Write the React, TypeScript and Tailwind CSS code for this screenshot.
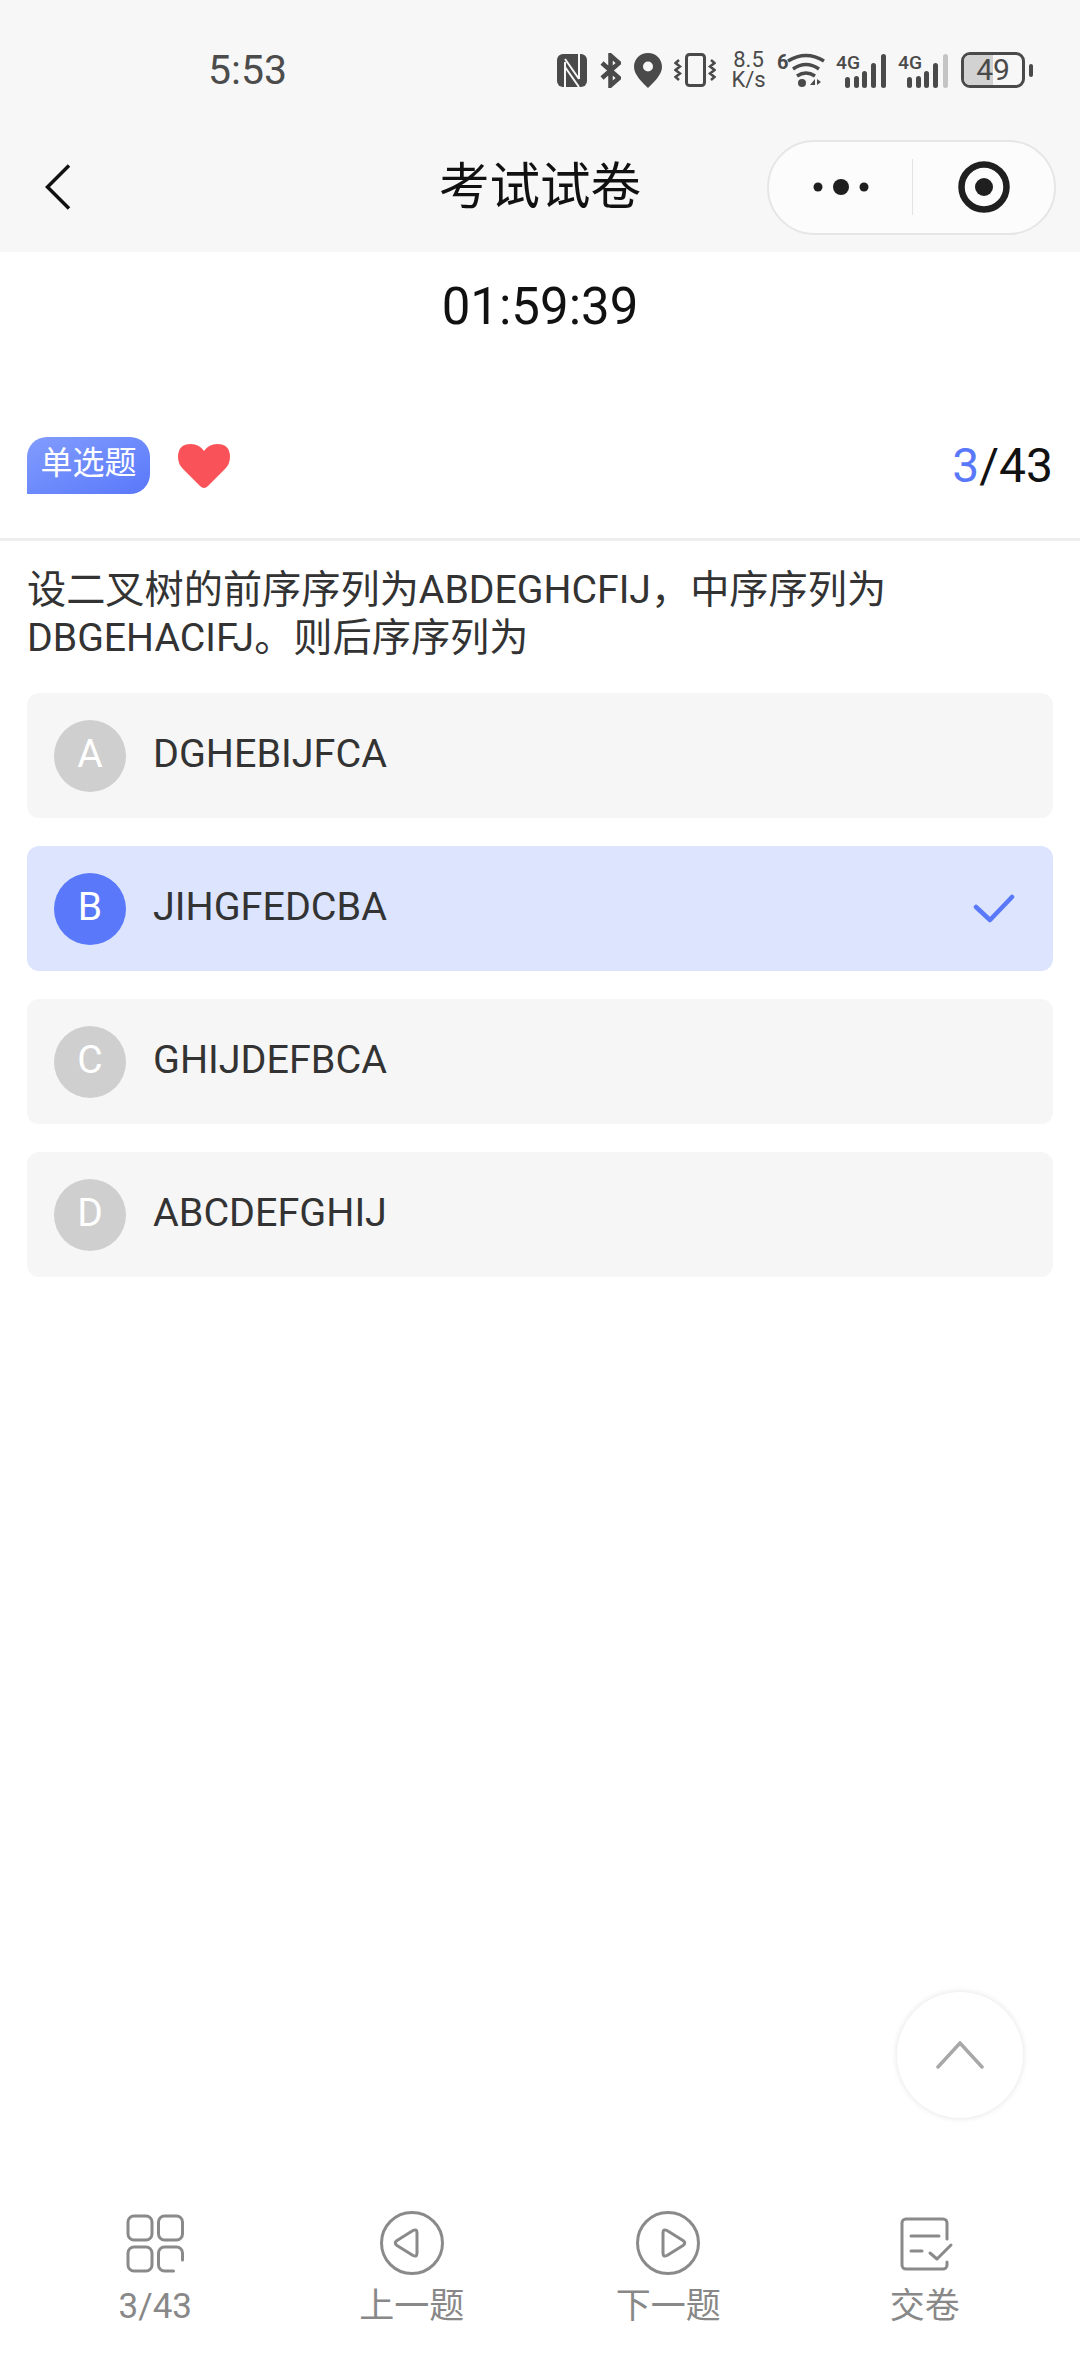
import React from "react";

const options = [
    {key: "A", text: "DGHEBIJFCA"},
    {key: "B", text: "JIHGFEDCBA", selected: true},
    {key: "C", text: "GHIJDEFBCA"},
    {key: "D", text: "ABCDEFGHIJ"},
];

const Signal = ({weak}: {weak?: boolean}) => (
    <svg width="50" height="41" viewBox="0 -3 50 41" fill="#4a4a4a">
        <text x="0" y="16" fontSize="19" fontWeight="500" textLength="24" lengthAdjust="spacingAndGlyphs">4G</text>
        <rect x="9" y="24" width="5" height="11" rx="2.5" />
        <rect x="18" y="23" width="5" height="12" rx="2.5" />
        <rect x="26" y="18" width="5" height="17" rx="2.5" />
        <rect x="35" y="10" width="5" height="25" rx="2.5" />
        <rect x="45" y="1" width="5" height="34" rx="2.5" fill={weak ? "#c4c4c4" : "#4a4a4a"} />
    </svg>
);

const StatusBar = () => (
    <div className="h-[122px] pt-[50px] pl-[208px] pr-[47px] flex justify-between items-start">
        <span className="h-[40px] leading-[40px] text-[41px] text-[#4c4c4c]">5:53</span>
        <div className="flex items-center h-[40px] text-[#4a4a4a]">
            <svg width="30" height="33" viewBox="0 0 30 33">
                <rect width="30" height="33" rx="6" fill="#4a4a4a" />
                <path d="M8 8v25M22 0v25" stroke="#f7f7f7" strokeWidth="2" fill="none" />
                <path d="M8 5l14 20M8 13l14 20" stroke="#f7f7f7" strokeWidth="2" fill="none" />
            </svg>
            <svg className="ml-[13px]" width="21" height="35" viewBox="0 0 21 35" fill="none" stroke="#4a4a4a" strokeWidth="4.500">
                <path d="M2 10l17 15-8.500 7.500V2.500L19 10 2 25" />
            </svg>
            <svg className="ml-[13px]" width="28" height="35" viewBox="0 0 28 35">
                <path d="M14 0C6 0 0 6 0 14 0 22 9 30 14 35 19 30 28 22 28 14 28 6 22 0 14 0z" fill="#4a4a4a" />
                <circle cx="14" cy="13.500" r="5" fill="#f7f7f7" />
            </svg>
            <svg className="ml-[12px]" width="42" height="34" viewBox="0 0 42 34" fill="none" stroke="#4a4a4a" strokeWidth="2.500">
                <rect x="12.500" y="1.500" width="18" height="31" rx="3" strokeWidth="3" />
                <path d="M5 7L1.500 10 6 13.500 1.500 17 6 20.500 1.500 24 5 27M37 7l3.500 3L36 13.500l4.500 3.500-4.500 3.500 4.500 3.500L37 27" />
            </svg>
            <div className="ml-[15px] w-[35px] flex flex-col items-center text-[22px] leading-[20px] text-[#4a4a4a]">
                <span>8.5</span>
                <span>K/s</span>
            </div>
            <svg className="ml-[11px]" width="49" height="38" viewBox="0 0 49 38" fill="none" stroke="#4a4a4a" strokeWidth="3.500">
                <text x="0" y="18" fontSize="20" fontWeight="700" fill="#4a4a4a" stroke="none">6</text>
                <path d="M11 10q18-11 36 0M16 18q13-9 26 0M20 25q9-6 18 0" />
                <circle cx="25" cy="32" r="4" fill="#4a4a4a" stroke="none" />
                <path d="M33 34h5v-6zM40 28v6l4-3z" fill="#4a4a4a" stroke="none" />
            </svg>
            <div className="ml-[10px] flex"><Signal /></div>
            <div className="ml-[12px] flex"><Signal weak /></div>
            <div className="ml-[13px] relative w-[64px] h-[36px] rounded-[9px] border-[3px] border-[#4a4a4a] overflow-hidden flex items-center justify-center">
                <div className="absolute left-0 top-0 bottom-0 w-[29px] bg-[#d2d2d2]" />
                <span className="relative text-[30px] leading-none text-[#4a4a4a]">49</span>
            </div>
            <div className="ml-[4px] w-[4px] h-[13px] rounded-full bg-[#4a4a4a]" />
        </div>
    </div>
);

const NavBar = () => (
    <div className="h-[130px] px-[24px] grid grid-cols-[1fr_auto_1fr] items-center">
        <svg className="ml-[21px]" width="26" height="46" viewBox="0 0 26 46" fill="none" stroke="#111" strokeWidth="3.500">
            <path d="M24 1.500L2.500 23 24 44.500" />
        </svg>
        <div className="text-[50.500px] leading-[60px] text-[#111]">考试试卷</div>
        <div className="flex justify-end">
            <div className="w-[289px] h-[95px] rounded-full border-2 border-[#e6e6e6] bg-[#fcfcfc] flex items-center">
                <div className="w-[143px] flex justify-center">
                    <svg width="56" height="16" viewBox="0 0 56 16" fill="#1f1f1f">
                        <circle cx="5" cy="8" r="4.500" />
                        <circle cx="28" cy="8" r="8" />
                        <circle cx="51" cy="8" r="4.500" />
                    </svg>
                </div>
                <div className="w-px h-[56px] bg-[#e3e3e3]" />
                <div className="flex-1 flex justify-center">
                    <svg width="52" height="52" viewBox="0 0 52 52">
                        <circle cx="26" cy="26" r="22.500" fill="none" stroke="#1f1f1f" strokeWidth="6.500" />
                        <circle cx="26" cy="26" r="9" fill="#1f1f1f" />
                    </svg>
                </div>
            </div>
        </div>
    </div>
);

const Option = ({letter, text, selected}: {letter: string; text: string; selected?: boolean}) => (
    <div className={selected
        ? "h-[125px] rounded-[12px] bg-[#dce4fe] pl-[27px] pr-[38px] flex items-center"
        : "h-[125px] rounded-[12px] bg-[#f6f6f6] pl-[27px] pr-[38px] flex items-center"}>
        <div className={selected
            ? "w-[72px] h-[72px] pb-[2px] rounded-full bg-[#5a78fa] text-white text-[39px] flex items-center justify-center"
            : "w-[72px] h-[72px] pb-[2px] rounded-full bg-[#cfcfcf] text-white text-[39px] flex items-center justify-center"}>
            {letter}
        </div>
        <div className="ml-[27px] pb-[3px] flex-1 text-[39.500px] text-[#333]">{text}</div>
        {selected && (
            <svg width="42" height="30" viewBox="0 0 42 30" fill="none" stroke="#5a78fa" strokeWidth="4.500" strokeLinecap="round" strokeLinejoin="round">
                <path d="M3 13l14 13L39 3" />
            </svg>
        )}
    </div>
);

const BottomBar = () => (
    <div className="mt-auto px-[27px] pb-[49px] grid grid-cols-4 text-[35px] leading-[40px] text-[#888]">
        <div className="flex flex-col items-center gap-[11px]">
            <svg width="66" height="66" viewBox="0 0 66 66" fill="none" stroke="#8a8a8a" strokeWidth="3">
                <rect x="6" y="6" width="24" height="24" rx="6" />
                <rect x="36.500" y="6" width="24" height="24" rx="6" />
                <rect x="6" y="37" width="24" height="24" rx="6" />
                <path d="M60.500 50V43a6 6 0 0 0-6-6H42.500a6 6 0 0 0-6 6v12a6 6 0 0 0 6 6h9" strokeLinecap="round" />
            </svg>
            <span>3/43</span>
        </div>
        <div className="flex flex-col items-center gap-[11px]">
            <svg width="66" height="66" viewBox="0 0 66 66" fill="none" stroke="#8a8a8a" strokeWidth="3">
                <circle cx="33" cy="33" r="30.500" />
                <path d="M18 30.500l16-10q4-2 4 2.500v20q0 4.500-4 2.500l-16-10q-3.500-2.500 0-5z" strokeLinejoin="round" />
            </svg>
            <span>上一题</span>
        </div>
        <div className="flex flex-col items-center gap-[11px]">
            <svg width="66" height="66" viewBox="0 0 66 66" fill="none" stroke="#8a8a8a" strokeWidth="3">
                <circle cx="33" cy="33" r="30.500" />
                <path d="M48 30.500l-16-10q-4-2-4 2.500v20q0 4.500 4 2.500l16-10q3.500-2.500 0-5z" strokeLinejoin="round" />
            </svg>
            <span>下一题</span>
        </div>
        <div className="flex flex-col items-center gap-[11px]">
            <svg width="66" height="66" viewBox="0 0 66 66" fill="none" stroke="#8a8a8a" strokeWidth="3" strokeLinecap="round" strokeLinejoin="round">
                <path d="M55 29V13a4 4 0 0 0-4-4H14a4 4 0 0 0-4 4v42a4 4 0 0 0 4 4h37a4 4 0 0 0 4-4v-3" />
                <path d="M19 26h28M19 41h11" />
                <path d="M38 43l7 6 14-14" />
            </svg>
            <span>交卷</span>
        </div>
    </div>
);

export default function App() {
    return (
        <div className="relative w-[1080px] h-[2376px] bg-white flex flex-col overflow-hidden font-[Roboto,'Noto_Sans_CJK_SC',sans-serif]">
            <div className="bg-[#f7f7f7]">
                <StatusBar />
                <NavBar />
            </div>

            <div className="h-[110px] flex items-center justify-center text-[51px] text-[#111]">01:59:39</div>

            <div className="pt-[75px] pb-[44px] px-[27px] flex items-center justify-between border-b-[3px] border-[#eeeeee]">
                <div className="flex items-center">
                    <div className="w-[123px] h-[57px] rounded-t-[20px] rounded-br-[20px] bg-gradient-to-br from-[#829cfd] to-[#5a78fa] text-white text-[32px] leading-[52px] text-center">
                        单选题
                    </div>
                    <svg className="ml-[28px]" width="52" height="44" viewBox="0 0 52 44" fill="#f95258">
                        <path d="M26 44q-2 0-4-2L5 25Q0 20 0 13 0 0 13 0q8 0 13 7 5-7 13-7 13 0 13 13 0 7-5 12L30 42q-2 2-4 2z" />
                    </svg>
                </div>
                <div className="text-[48px] leading-[57px] text-[#111]">
                    <span className="text-[#5a78fa]">3</span>/43
                </div>
            </div>

            <div className="pt-[25px] px-[27px] text-[39.200px] leading-[48px] text-[#333]">
                设二叉树的前序序列为ABDEGHCFIJ，中序序列为<br />DBGEHACIFJ。则后序序列为
            </div>

            <div className="mt-[31px] px-[27px] flex flex-col gap-[28px]">
                {options.map((o) => (
                    <Option key={o.key} letter={o.key} text={o.text} selected={o.selected} />
                ))}
            </div>

            <div className="absolute left-[897px] top-[1992px] w-[126px] h-[126px] rounded-full bg-white shadow-[0_0_6px_rgba(0,0,0,0.12)] flex items-center justify-center">
                <svg width="48" height="28" viewBox="0 0 48 28" fill="none" stroke="#a8a8a8" strokeWidth="3.500" strokeLinecap="round">
                    <path d="M2 26L24 2l22 24" />
                </svg>
            </div>

            <BottomBar />
        </div>
    );
}
